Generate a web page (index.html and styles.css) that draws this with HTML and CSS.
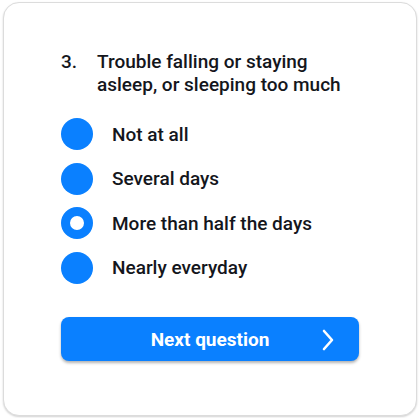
FILE: index.html
```
<!DOCTYPE html>
<html>
<head>
<meta charset="utf-8">
<link rel="stylesheet" href="styles.css">
</head>
<body>
<div class="card">
  <div class="question">
    <span class="num">3.</span>
    <span class="qtext">Trouble falling or staying asleep, or sleeping too much</span>
  </div>
  <div class="options">
    <div class="option"><span class="radio"></span><span class="label">Not at all</span></div>
    <div class="option"><span class="radio"></span><span class="label">Several days</span></div>
    <div class="option"><span class="radio selected"></span><span class="label">More than half the days</span></div>
    <div class="option"><span class="radio"></span><span class="label">Nearly everyday</span></div>
  </div>
  <button class="next">
    <span></span>
    <span class="next-label">Next question</span>
    <svg class="chev" width="14" height="22" viewBox="0 0 14 22"><path d="M3 2 L11 11 L3 20" fill="none" stroke="#fff" stroke-width="2.6" stroke-linecap="round" stroke-linejoin="round"/></svg>
  </button>
</div>
</body>
</html>
```
FILE: styles.css
```
html, body {
  margin: 0;
  padding: 0;
  background: #fff;
}
body {
  font-family: Roboto, "Liberation Sans", sans-serif;
  padding: 2px 3px;
}
.card {
  box-sizing: border-box;
  width: 414px;
  height: 414px;
  border: 1px solid #dcdcdc;
  border-radius: 16px;
  box-shadow: 0 1px 2px rgba(0,0,0,0.18);
  padding: 47px 57px 0 57px;
  background: #fff;
}
.question {
  display: flex;
  font-size: 19px;
  font-weight: 500;
  line-height: 23px;
  color: #14161c;
}
.num {
  width: 36px;
  flex: none;
}
.qtext {
  width: 250px;
}
.options {
  margin-top: 22px;
  display: flex;
  flex-direction: column;
  gap: 12.5px;
}
.option {
  display: flex;
  align-items: center;
  gap: 19px;
  height: 32px;
}
.radio {
  box-sizing: border-box;
  width: 32px;
  height: 32px;
  border-radius: 50%;
  background: #0a80ff;
  flex: none;
}
.radio.selected {
  background: #fff;
  border: 9px solid #0a80ff;
}
.label {
  font-size: 19px;
  font-weight: 500;
  color: #14161c;
}
.next {
  margin-top: 33px;
  width: 298px;
  height: 44px;
  border: none;
  border-radius: 8px;
  background: #0a80ff;
  box-shadow: 0 2px 3px rgba(0,0,0,0.3);
  display: grid;
  grid-template-columns: 1fr auto 1fr;
  align-items: center;
  padding: 2px 24px 0 24px;
  font-family: Roboto, "Liberation Sans", sans-serif;
  color: #fff;
  font-size: 19px;
  font-weight: 700;
}
.chev {
  justify-self: end;
}
```
